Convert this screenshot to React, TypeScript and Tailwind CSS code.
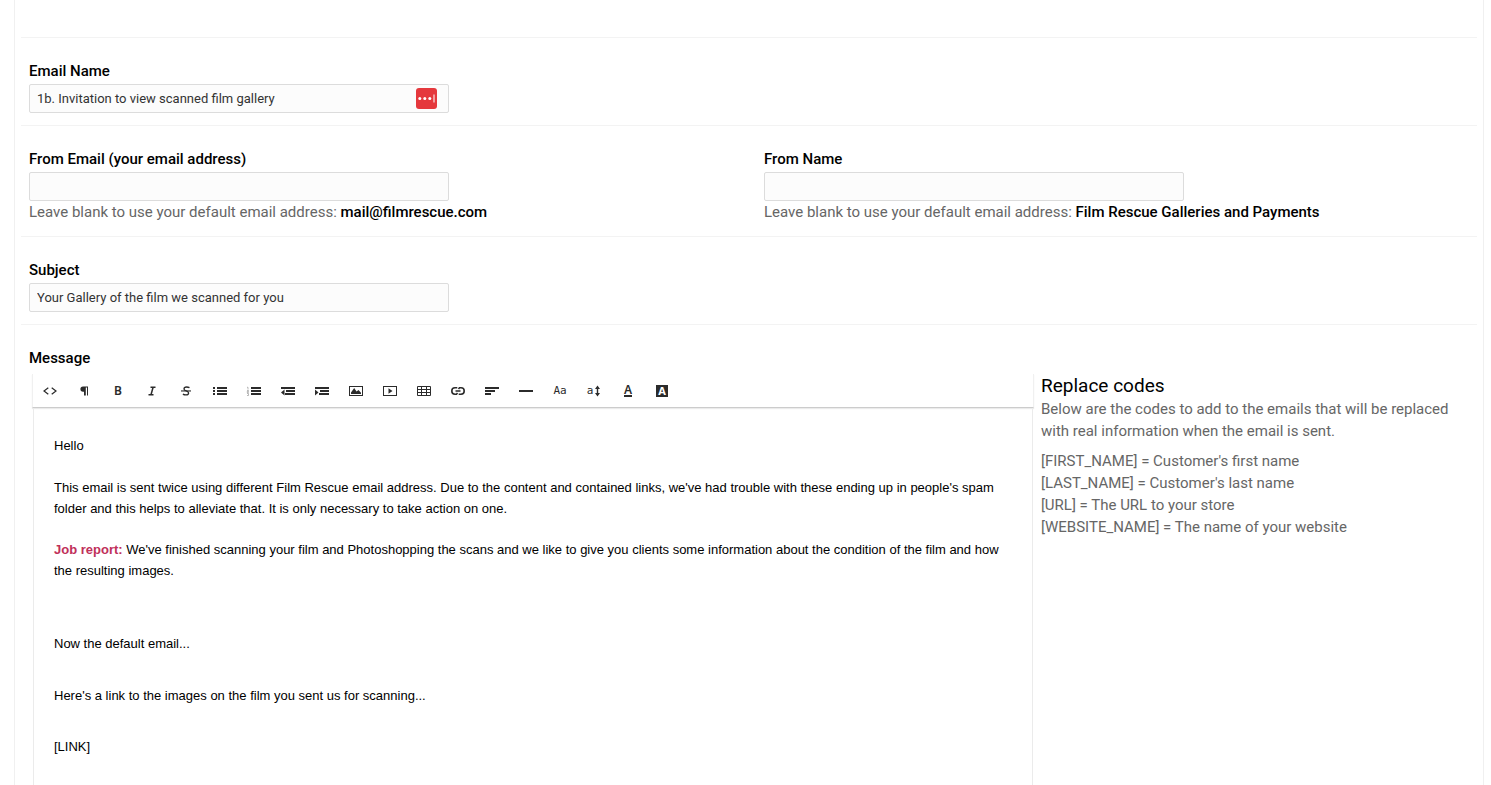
import type { ReactNode } from "react";

const icon = "block h-4 w-4 overflow-visible";

function Icon({ children }: { children: ReactNode }) {
  return (
    <svg className={icon} viewBox="0 0 16 16" fill="#2b2b2b" aria-hidden="true">
      {children}
    </svg>
  );
}

const bars = (
  <>
    <rect x="5" y="4" width="10" height="2" />
    <rect x="5" y="7" width="10" height="2" />
    <rect x="5" y="10" width="10" height="2" />
  </>
);

const indentBars = (
  <>
    <rect x="1" y="4" width="14" height="2" />
    <rect x="6" y="7" width="9" height="2" />
    <rect x="5" y="10" width="10" height="2" />
  </>
);

const mono = "font-['DejaVu_Sans_Mono',monospace] text-[11px] leading-4 text-[#2b2b2b]";

const tools: { name: string; art: ReactNode }[] = [
  {
    name: "HTML",
    art: (
      <Icon>
        <path d="M6.300 4.700 2 8l4.300 3.300M9.700 4.700 14 8l-4.300 3.300" fill="none" stroke="#2b2b2b" strokeWidth="1.200" />
      </Icon>
    ),
  },
  {
    name: "Format",
    art: (
      <Icon>
        <path d="M7 3.500h5v9h-1V4.500H9.800v8H8V8.700H7a2.600 2.600 0 0 1 0-5.200Z" />
      </Icon>
    ),
  },
  {
    name: "Bold",
    art: <span className="font-['Noto_Sans',sans-serif] text-[12px] leading-4 font-semibold text-[#2b2b2b]">B</span>,
  },
  {
    name: "Italic",
    art: (
      <Icon>
        <path d="M6.500 4.200h5M4.500 11.800h5M9.100 4.200 7 11.800" fill="none" stroke="#2b2b2b" strokeWidth="1.500" />
      </Icon>
    ),
  },
  {
    name: "Strikethrough",
    art: (
      <Icon>
        <path d="M11.500 4.700C10.500 4.200 9.600 4 8.600 4 7 4 6 4.700 6 5.900c0 2.300 4.600 1.700 4.600 4.100 0 1.200-1.100 1.900-2.600 1.900-1.200 0-2.200-.2-3.100-.800" fill="none" stroke="#2b2b2b" strokeWidth="1.300" />
        <rect x="3" y="7.400" width="10" height="1.100" />
      </Icon>
    ),
  },
  {
    name: "Unordered list",
    art: (
      <Icon>
        {bars}
        <rect x="1" y="4" width="2" height="2" />
        <rect x="1" y="7" width="2" height="2" />
        <rect x="1" y="10" width="2" height="2" />
      </Icon>
    ),
  },
  {
    name: "Ordered list",
    art: (
      <Icon>
        {bars}
        <path d="M1 4.300h1V6.500M1 7.500h1.500v1H1.200v1h1.500M1 10.500h1.500v2H1" fill="none" stroke="#999" strokeWidth=".7" />
      </Icon>
    ),
  },
  {
    name: "Outdent",
    art: (
      <Icon>
        {indentBars}
        <path d="M4.500 6.500v6L1 9.500Z" />
      </Icon>
    ),
  },
  {
    name: "Indent",
    art: (
      <Icon>
        {indentBars}
        <path d="M1 6.500v6l3.500-3Z" />
      </Icon>
    ),
  },
  {
    name: "Image",
    art: (
      <Icon>
        <path fillRule="evenodd" d="M1 3h14v10H1Zm1 1v8h12V4Z" />
        <path d="M3 11V9.500L6.200 5 8.500 8.500 10.500 7 13 9.800V11Z" />
      </Icon>
    ),
  },
  {
    name: "Video",
    art: (
      <Icon>
        <path fillRule="evenodd" d="M1 3h14v10H1Zm1 1v8h12V4Z" />
        <path d="M6.500 5.300 10.500 8l-4 2.700Z" />
      </Icon>
    ),
  },
  {
    name: "Table",
    art: (
      <Icon>
        <path d="M1.500 3.500h13v9h-13ZM1 6.500h14M1 9.500h14M5.500 3v10M10.500 3v10" fill="none" stroke="#2b2b2b" strokeWidth="1" />
      </Icon>
    ),
  },
  {
    name: "Link",
    art: (
      <Icon>
        <path d="M7.300 4.800H5a3.200 3.200 0 0 0 0 6.400h1.500l1-1.200M8.700 11.200H11a3.200 3.200 0 0 0 0-6.400H9.500l-1 1.200M5.500 8h5" fill="none" stroke="#2b2b2b" strokeWidth="1.600" />
      </Icon>
    ),
  },
  {
    name: "Align",
    art: (
      <Icon>
        <rect x="1" y="4" width="14" height="2" />
        <rect x="1" y="7" width="10" height="2" />
        <rect x="1" y="10" width="6" height="2" />
      </Icon>
    ),
  },
  {
    name: "Horizontal rule",
    art: (
      <Icon>
        <rect x="1" y="7" width="14" height="2" />
      </Icon>
    ),
  },
  { name: "Font", art: <span className={mono}>Aa</span> },
  {
    name: "Font size",
    art: (
      <span className="flex items-center">
        <span className={mono}>a</span>
        <svg className="block h-4 w-2" viewBox="0 0 8 16" fill="#2b2b2b" aria-hidden="true">
          <path d="M4.500 2.500 7 6H5.200v4H7l-2.500 3.500L2 10h1.800V6H2Z" />
        </svg>
      </span>
    ),
  },
  {
    name: "Font color",
    art: (
      <span className="block h-3 w-2 border-b-2 border-[#2b2b2b] text-center font-['Noto_Sans',sans-serif] text-[12px] leading-[10px] font-semibold text-[#2b2b2b]">
        A
      </span>
    ),
  },
  {
    name: "Background color",
    art: (
      <span className="block h-3 w-3 bg-[#2b2b2b] text-center font-['Noto_Sans',sans-serif] text-[11px] leading-3 font-bold text-white">
        A
      </span>
    ),
  },
];

function Divider() {
  return <hr className="mx-[6px] h-px border-0 bg-[#f3f3f3]" />;
}

function Field({
  id,
  label,
  value = "",
  hint,
  badge = false,
}: {
  id: string;
  label: string;
  value?: string;
  hint?: string;
  badge?: boolean;
}) {
  return (
    <div className="min-w-0 flex-1">
      <label htmlFor={id} className="mb-0.5 block text-[15px] leading-[22px] font-medium text-black">
        {label}
      </label>
      <div className="relative w-full max-w-[420px]">
        <input
          id={id}
          type="text"
          defaultValue={value}
          className="block h-[29px] w-full rounded-xs border border-[#dcdcdc] bg-[#fcfcfc] px-[7px] text-[13px] text-[#333] outline-none"
        />
        {badge && (
          <button type="button" aria-label="Fill in with password manager" className="absolute top-1 right-3 block">
            <svg className="block h-[21px] w-[21px]" viewBox="0 0 21 21" aria-hidden="true">
              <rect width="21" height="21" rx="3" fill="#e5383d" />
              <circle cx="3.800" cy="10.500" r="1.500" fill="#fff" />
              <circle cx="8.800" cy="10.500" r="1.500" fill="#fff" />
              <circle cx="13.800" cy="10.500" r="1.500" fill="#fff" />
              <rect x="17.500" y="6.500" width="1" height="8" fill="#fff" />
            </svg>
          </button>
        )}
      </div>
      {hint && (
        <p className="text-[15px] leading-[23px] text-[#666]">
          Leave blank to use your default email address: <strong className="font-medium text-black">{hint}</strong>
        </p>
      )}
    </div>
  );
}

const row = "flex gap-[30px] px-[14px] pt-[22px] pb-3";

export default function App() {
  return (
    <div className="flex min-h-screen bg-white pr-[7px] pl-[14px] font-['Roboto',sans-serif]">
      <form className="flex min-w-0 flex-1 flex-col border-x border-[#f0f0f0]">
        <div className="h-[37px]" />
        <Divider />
        <div className={row}>
          <Field id="email-name" label="Email Name" value="1b. Invitation to view scanned film gallery" badge />
        </div>
        <Divider />
        <div className={row}>
          <Field id="from-email" label="From Email (your email address)" hint="mail@filmrescue.com" />
          <Field id="from-name" label="From Name" hint="Film Rescue Galleries and Payments" />
        </div>
        <Divider />
        <div className={row}>
          <Field id="subject" label="Subject" value="Your Gallery of the film we scanned for you" />
        </div>
        <Divider />
        <div className="flex flex-1 flex-col px-[14px] pt-[22px]">
          <h2 id="message-label" className="text-[15px] leading-[22px] font-medium text-black">
            Message
          </h2>
          <div className="mt-[5px] flex flex-1">
            <section className="ml-1 flex w-[1000px] min-w-0 flex-col">
              <div
                role="toolbar"
                aria-label="Formatting"
                className="-mx-px flex h-[34px] items-center border-x border-b border-x-[#f0f0f0] border-b-[#cccccc] shadow-[0_1px_1px_rgba(0,0,0,0.08)]"
              >
                {tools.map((tool) => (
                  <button
                    key={tool.name}
                    type="button"
                    aria-label={tool.name}
                    className="flex h-[34px] w-[34px] items-center justify-center"
                  >
                    {tool.art}
                  </button>
                ))}
              </div>
              <div
                role="textbox"
                aria-labelledby="message-label"
                aria-multiline="true"
                contentEditable
                suppressContentEditableWarning
                className="flex-1 border-x border-[#ebebeb] px-5 pt-[27px] font-['Liberation_Sans',Arial,sans-serif] text-[13px] leading-[21px] text-black outline-none"
              >
                <p className="mb-[21px]">Hello</p>
                <p className="mb-5">
                  This email is sent twice using different Film Rescue email address. Due to the content and contained
                  links, we've had trouble with these ending up in people's spam folder and this helps to alleviate that.
                  It is only necessary to take action on one.
                </p>
                <p className="mb-[52px]">
                  <strong className="font-bold text-[#c0305a]">Job report:</strong> We've finished scanning your film and
                  Photoshopping the scans and we like to give you clients some information about the condition of the film
                  and how the resulting images.
                </p>
                <p className="mb-[31px]">Now the default email...</p>
                <p className="mb-[30px]">Here's a link to the images on the film you sent us for scanning...</p>
                <p>[LINK]</p>
              </div>
            </section>
            <aside className="ml-2 min-w-0 flex-1 text-[15px] leading-[22px] text-[#666]">
              <h3 className="text-[19px] leading-6 text-black">Replace codes</h3>
              <p className="mb-2 max-w-[420px]">
                Below are the codes to add to the emails that will be replaced with real information when the email is
                sent.
              </p>
              <ul>
                <li>[FIRST_NAME] = Customer's first name</li>
                <li>[LAST_NAME] = Customer's last name</li>
                <li>[URL] = The URL to your store</li>
                <li>[WEBSITE_NAME] = The name of your website</li>
              </ul>
            </aside>
          </div>
        </div>
      </form>
    </div>
  );
}
